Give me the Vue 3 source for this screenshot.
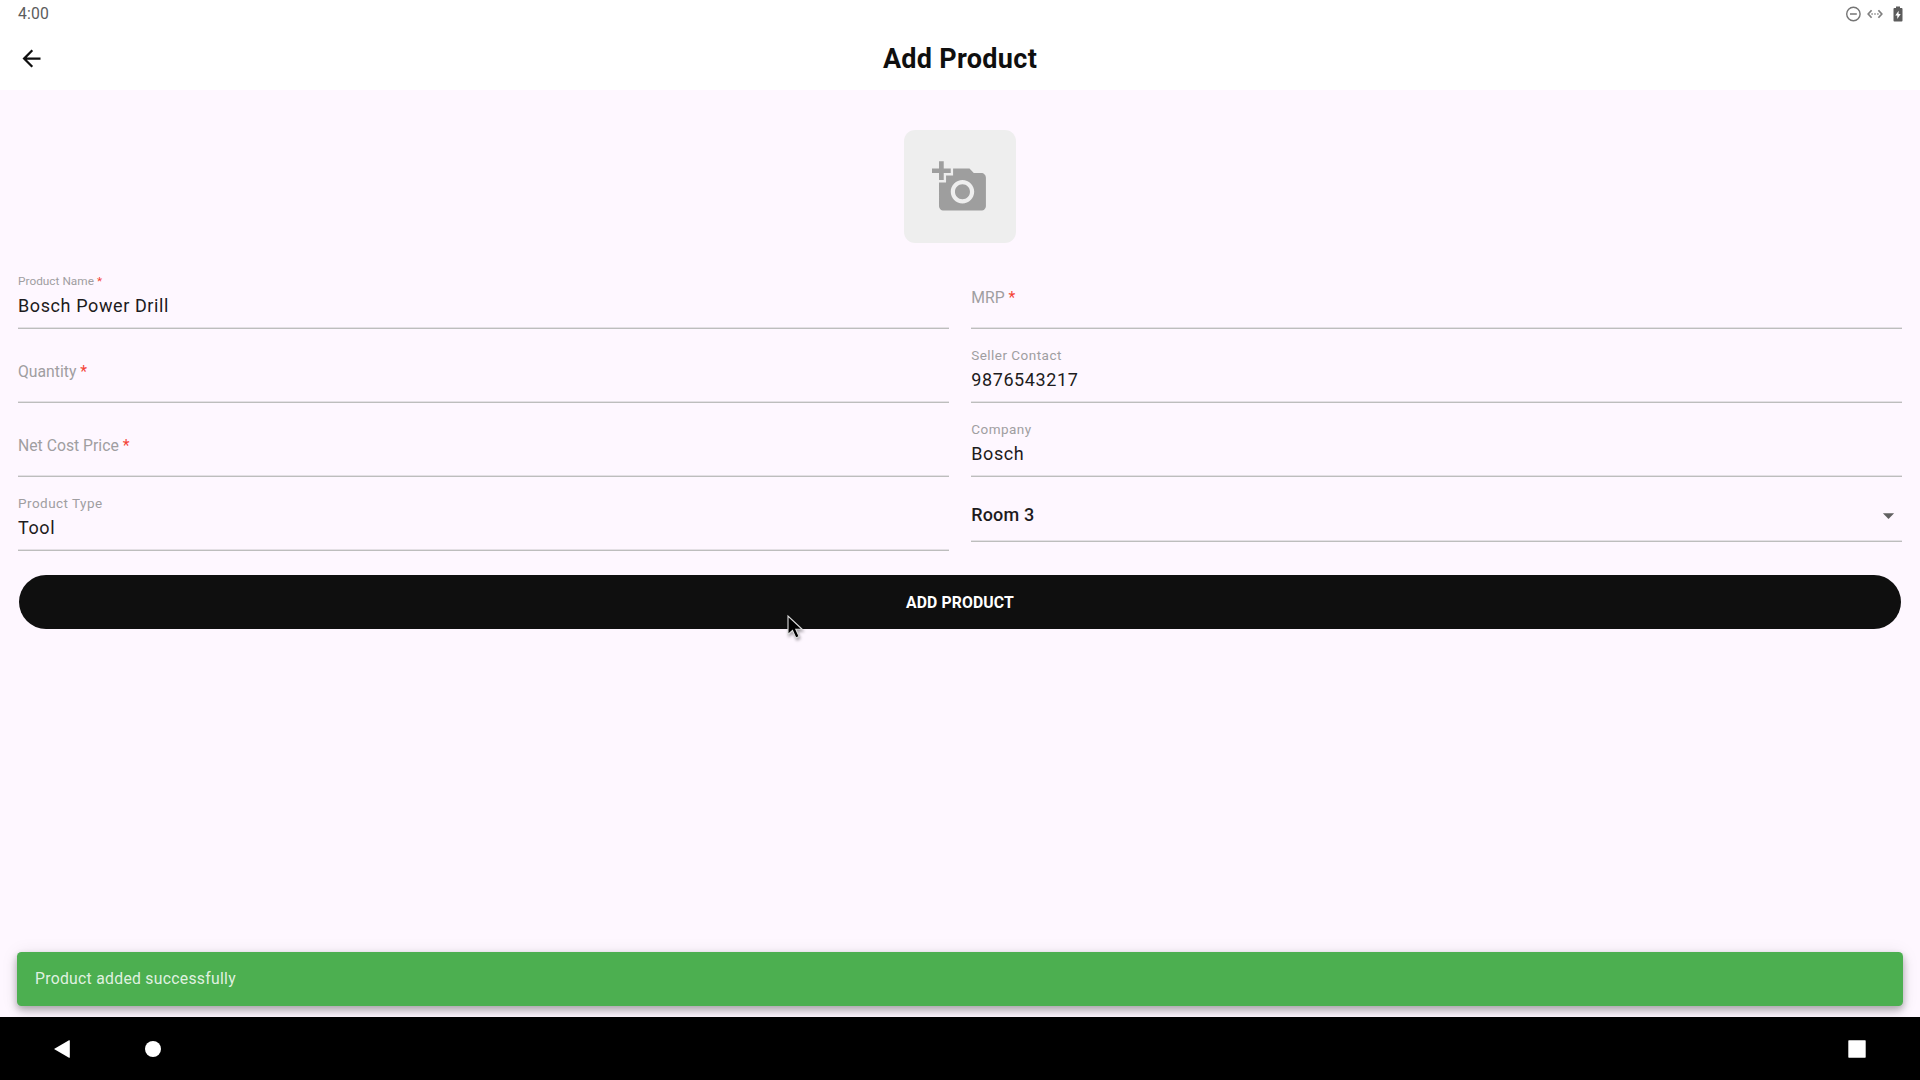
<script setup>
const fields = [
  { label: 'Product Name', required: true, value: 'Bosch Power Drill' },
  { label: 'MRP', required: true, value: '' },
  { label: 'Quantity', required: true, value: '' },
  { label: 'Seller Contact', value: '9876543217' },
  { label: 'Net Cost Price', required: true, value: '' },
  { label: 'Company', value: 'Bosch' },
  { label: 'Product Type', value: 'Tool' },
]
</script>

<template>
  <div class="screen">
    <header class="top">
      <div class="status">
        <span class="clock">4:00</span>
        <div class="status-icons">
          <svg width="16" height="16" viewBox="0 0 16 16" fill="none" stroke="#757575">
            <circle cx="8.4" cy="8" r="6.7" stroke-width="1.4" />
            <path d="M5 8h6.800" stroke-width="1.500" />
          </svg>
          <svg width="16" height="16" viewBox="0 0 16 16" fill="none" stroke="#808080" stroke-width="1.700">
            <path d="M4.600 4.200L1.200 8l3.400 3.800M11.400 4.200L14.800 8l-3.400 3.800" />
            <path d="M4.400 8h1.400M7.300 8h1.400M10.200 8h1.400" />
          </svg>
          <svg class="battery" width="10" height="16" viewBox="0 0 10 16">
            <path d="M3 .5h4V2h1.600q.9 0 .9.9v11.700q0 .9-.9.9H1.400q-.9 0-.9-.9V2.900q0-.9.9-.9H3z" fill="#5c5c5c" />
            <path d="M5.600 4.800L2.300 9.500h2v3.400l3.400-4.800h-2.100z" fill="#fff" />
          </svg>
        </div>
      </div>
      <div class="appbar">
        <svg class="back" width="27" height="27" viewBox="0 0 24 24" fill="#0f0f0f">
          <path d="M20 11H7.830l5.590-5.590L12 4l-8 8 8 8 1.410-1.410L7.830 13H20v-2z" />
        </svg>
        <h1>Add Product</h1>
        <span class="spacer"></span>
      </div>
    </header>

    <main>
      <div class="photo">
        <svg viewBox="0 0 24 24" fill="#9e9e9e">
          <path d="M3 4V1h2v3h3v2H5v3H3V6H0V4h3zm3 6V7h3V4h7l1.830 2H21c1.100 0 2 .9 2 2v12c0 1.100-.9 2-2 2H5c-1.100 0-2-.9-2-2V10h3zm7 9c2.760 0 5-2.240 5-5s-2.240-5-5-5-5 2.240-5 5 2.240 5 5 5zm-3.200-5c0 1.770 1.430 3.200 3.200 3.200s3.200-1.430 3.200-3.200-1.430-3.200-3.200-3.200-3.200 1.430-3.200 3.200z" />
        </svg>
      </div>

      <div class="grid">
        <div
          v-for="f in fields"
          :key="f.label"
          class="field"
          :class="{ empty: !f.value, required: f.required }"
        >
          <label>{{ f.label }}<span v-if="f.required" class="star"> *</span></label>
          <div v-if="f.value" class="value">{{ f.value }}</div>
        </div>
        <div class="select">
          <span>Room 3</span>
          <svg width="27" height="27" viewBox="0 0 24 24" fill="#616161"><path d="M7 10l5 5 5-5z" /></svg>
        </div>
      </div>

      <button class="submit">ADD PRODUCT</button>
      <div class="snackbar">Product added successfully</div>
    </main>

    <nav>
      <svg width="16" height="18" viewBox="0 0 16 18" fill="#fff"><path d="M0 9L15 .3q.8-.4.8.4v16.600q0 .8-.8.4z" /></svg>
      <span class="home"></span>
      <svg class="recent" width="18" height="18" viewBox="0 0 18 18" fill="#fff"><rect x=".3" y=".3" width="17.400" height="17.400" rx=".6" /></svg>
    </nav>

    <svg class="cursor" width="24" height="32" viewBox="0 0 24 32">
      <path d="M2 2v18.500l4.500-4 3.400 7.500 3.200-1.500-3.300-7.200h6.400z" fill="#000" stroke="#ddd" stroke-width="1.100" />
    </svg>
  </div>
</template>

<style>
body {
  margin: 0;
}
</style>

<style scoped>
* {
  box-sizing: border-box;
}
.screen {
  position: relative;
  display: flex;
  flex-direction: column;
  width: 1920px;
  height: 1080px;
  overflow: hidden;
  background: #fef7ff;
  color: #1d1b20;
  font-family: Roboto, sans-serif;
}
.top {
  height: 90px;
  background: #fff;
}
.status {
  display: flex;
  justify-content: space-between;
  height: 27px;
  padding: 0 17.500px 0 18px;
}
.clock {
  font-size: 15.750px;
  line-height: 27px;
  font-weight: 400;
  letter-spacing: 0.200px;
  color: #5c5c5c;
}
.status-icons {
  display: flex;
  gap: 5.500px;
  padding-top: 5.500px;
}
.battery {
  margin-left: 4.500px;
}
.status-icons svg {
  display: block;
}
.appbar {
  display: flex;
  align-items: center;
  justify-content: space-between;
  height: 63px;
  padding: 0 18px;
}
.back,
.spacer {
  width: 27px;
}
h1 {
  margin: 0;
  font-size: 27px;
  font-weight: 700;
  line-height: 36px;
  letter-spacing: 0.300px;
  color: #0f0f0f;
}
main {
  flex: 1;
  display: flex;
  flex-direction: column;
  padding: 40.400px 18px 11px;
}
.photo {
  display: flex;
  align-items: center;
  justify-content: center;
  align-self: center;
  width: 112.500px;
  height: 112.500px;
  border-radius: 11.250px;
  background: #eee;
}
.photo svg {
  width: 56.250px;
  height: 56.250px;
}
.grid {
  display: grid;
  grid-template-columns: 1fr 1fr;
  grid-auto-rows: 74.250px;
  column-gap: 22.500px;
  margin-top: 11.450px;
}
.field {
  display: flex;
  flex-direction: column;
  justify-content: flex-end;
  padding-bottom: 10px;
  border-bottom: 1px solid #bdbdbd;
  box-shadow: inset 0 -1px rgba(189, 189, 189, 0.4);
}
label {
  margin-bottom: 5px;
  font-size: 13.500px;
  line-height: 16px;
  letter-spacing: 0.470px;
  color: #a09ea1;
}
.required label {
  font-size: 11.800px;
  letter-spacing: 0.030px;
}
.field.empty {
  padding-bottom: 17.700px;
}
.empty label {
  margin: 0;
  font-size: 15.750px;
  line-height: 24px;
  letter-spacing: 0;
}
.star {
  color: #f44336;
}
.value {
  font-size: 18px;
  line-height: 24px;
  letter-spacing: 0.600px;
}
.select {
  display: flex;
  align-items: center;
  justify-content: space-between;
  align-self: start;
  height: 65px;
  padding-top: 13px;
  border-bottom: 1px solid #bdbdbd;
  box-shadow: inset 0 -1px rgba(189, 189, 189, 0.4);
  font-size: 18px;
  font-weight: 500;
  letter-spacing: 0.150px;
}
.select span {
  margin-top: -1.500px;
}
.submit {
  height: 54.250px;
  margin: 23.200px 1px 0;
  border: 0;
  border-radius: 28px;
  background: #0f0f0f;
  color: #fff;
  font: 700 15.750px/54px Roboto, sans-serif;
  letter-spacing: 0.120px;
}
.snackbar {
  height: 54px;
  margin: auto -1px 0;
  padding-left: 18px;
  border-radius: 4.500px;
  background: #4caf50;
  color: rgba(255, 255, 255, 0.84);
  font-size: 15.750px;
  line-height: 53px;
  letter-spacing: 0.280px;
  box-shadow: 0 3px 6px rgba(0, 0, 0, 0.2), 0 6px 11px rgba(0, 0, 0, 0.14), 0 1px 18px rgba(0, 0, 0, 0.08);
}
nav {
  display: flex;
  align-items: center;
  height: 63px;
  padding: 0 54px 0 53.700px;
  background: #000;
}
.home {
  width: 16px;
  height: 16px;
  margin-left: 75.300px;
  border-radius: 50%;
  background: #fff;
}
.recent {
  margin-left: auto;
}
.cursor {
  position: absolute;
  left: 786px;
  top: 614px;
  filter: drop-shadow(1px 2px 1.500px rgba(0, 0, 0, 0.35));
}
</style>
